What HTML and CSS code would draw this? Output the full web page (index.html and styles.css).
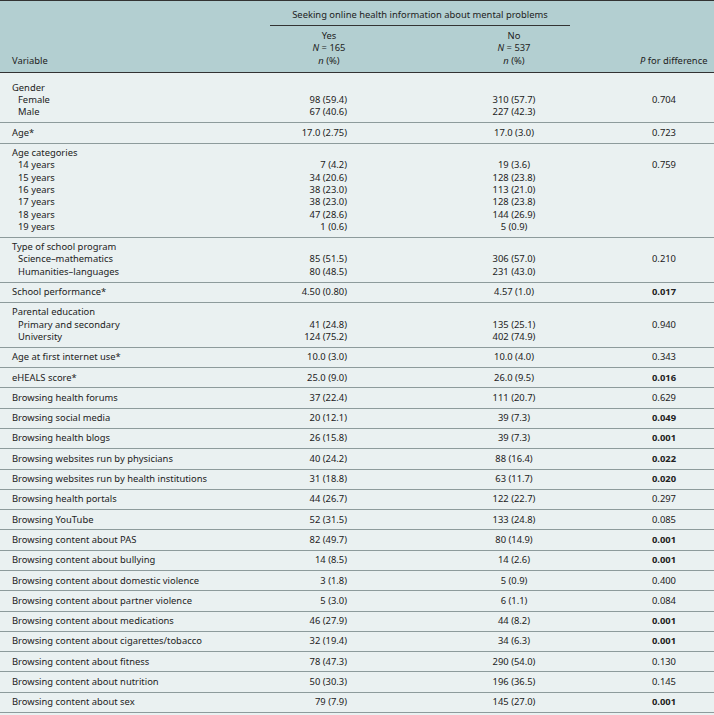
FILE: index.html
```html
<!DOCTYPE html>
<html>
<head>
<meta charset="utf-8">
<link rel="stylesheet" href="styles.css">
</head>
<body>
<table class="tbl">
  <colgroup>
    <col class="c-var"><col class="c-yes"><col class="c-no"><col class="c-p">
  </colgroup>
  <thead>
    <tr class="h1">
      <th rowspan="2" class="var h-var">Variable</th>
      <th colspan="2" class="span-cell"><div class="spanner">Seeking online health information about mental problems</div></th>
      <th rowspan="2" class="h-p"><i>P</i> for difference</th>
    </tr>
    <tr class="h2">
      <th class="h-yes">Yes<br><i>N</i> = 165<br><i>n</i> (%)</th>
      <th class="h-no">No<br><i>N</i> = 537<br><i>n</i> (%)</th>
    </tr>
  </thead>
  <tbody>
    <tr class="first">
      <td class="var">Gender<div class="sub">Female</div><div class="sub">Male</div></td>
      <td class="yes"><br>98 (59.4)<br>67 (40.6)</td>
      <td class="no"><br>310 (57.7)<br>227 (42.3)</td>
      <td class="p"><br>0.704</td>
    </tr>
    <tr><td class="var">Age*</td><td class="yes">17.0 (2.75)</td><td class="no">17.0 (3.0)</td><td class="p">0.723</td></tr>
    <tr>
      <td class="var">Age categories<div class="sub">14 years</div><div class="sub">15 years</div><div class="sub">16 years</div><div class="sub">17 years</div><div class="sub">18 years</div><div class="sub">19 years</div></td>
      <td class="yes"><br>7 (4.2)<br>34 (20.6)<br>38 (23.0)<br>38 (23.0)<br>47 (28.6)<br>1 (0.6)</td>
      <td class="no"><br>19 (3.6)<br>128 (23.8)<br>113 (21.0)<br>128 (23.8)<br>144 (26.9)<br>5 (0.9)</td>
      <td class="p"><br>0.759</td>
    </tr>
    <tr>
      <td class="var">Type of school program<div class="sub">Science–mathematics</div><div class="sub">Humanities–languages</div></td>
      <td class="yes"><br>85 (51.5)<br>80 (48.5)</td>
      <td class="no"><br>306 (57.0)<br>231 (43.0)</td>
      <td class="p"><br>0.210</td>
    </tr>
    <tr><td class="var">School performance*</td><td class="yes">4.50 (0.80)</td><td class="no">4.57 (1.0)</td><td class="p"><b>0.017</b></td></tr>
    <tr>
      <td class="var">Parental education<div class="sub">Primary and secondary</div><div class="sub">University</div></td>
      <td class="yes"><br>41 (24.8)<br>124 (75.2)</td>
      <td class="no"><br>135 (25.1)<br>402 (74.9)</td>
      <td class="p"><br>0.940</td>
    </tr>
    <tr><td class="var">Age at first internet use*</td><td class="yes">10.0 (3.0)</td><td class="no">10.0 (4.0)</td><td class="p">0.343</td></tr>
    <tr><td class="var">eHEALS score*</td><td class="yes">25.0 (9.0)</td><td class="no">26.0 (9.5)</td><td class="p"><b>0.016</b></td></tr>
    <tr><td class="var">Browsing health forums</td><td class="yes">37 (22.4)</td><td class="no">111 (20.7)</td><td class="p">0.629</td></tr>
    <tr><td class="var">Browsing social media</td><td class="yes">20 (12.1)</td><td class="no">39 (7.3)</td><td class="p"><b>0.049</b></td></tr>
    <tr><td class="var">Browsing health blogs</td><td class="yes">26 (15.8)</td><td class="no">39 (7.3)</td><td class="p"><b>0.001</b></td></tr>
    <tr><td class="var">Browsing websites run by physicians</td><td class="yes">40 (24.2)</td><td class="no">88 (16.4)</td><td class="p"><b>0.022</b></td></tr>
    <tr><td class="var">Browsing websites run by health institutions</td><td class="yes">31 (18.8)</td><td class="no">63 (11.7)</td><td class="p"><b>0.020</b></td></tr>
    <tr><td class="var">Browsing health portals</td><td class="yes">44 (26.7)</td><td class="no">122 (22.7)</td><td class="p">0.297</td></tr>
    <tr><td class="var">Browsing YouTube</td><td class="yes">52 (31.5)</td><td class="no">133 (24.8)</td><td class="p">0.085</td></tr>
    <tr><td class="var">Browsing content about PAS</td><td class="yes">82 (49.7)</td><td class="no">80 (14.9)</td><td class="p"><b>0.001</b></td></tr>
    <tr><td class="var">Browsing content about bullying</td><td class="yes">14 (8.5)</td><td class="no">14 (2.6)</td><td class="p"><b>0.001</b></td></tr>
    <tr><td class="var">Browsing content about domestic violence</td><td class="yes">3 (1.8)</td><td class="no">5 (0.9)</td><td class="p">0.400</td></tr>
    <tr><td class="var">Browsing content about partner violence</td><td class="yes">5 (3.0)</td><td class="no">6 (1.1)</td><td class="p">0.084</td></tr>
    <tr><td class="var">Browsing content about medications</td><td class="yes">46 (27.9)</td><td class="no">44 (8.2)</td><td class="p"><b>0.001</b></td></tr>
    <tr><td class="var">Browsing content about cigarettes/tobacco</td><td class="yes">32 (19.4)</td><td class="no">34 (6.3)</td><td class="p"><b>0.001</b></td></tr>
    <tr><td class="var">Browsing content about fitness</td><td class="yes">78 (47.3)</td><td class="no">290 (54.0)</td><td class="p">0.130</td></tr>
    <tr><td class="var">Browsing content about nutrition</td><td class="yes">50 (30.3)</td><td class="no">196 (36.5)</td><td class="p">0.145</td></tr>
    <tr><td class="var">Browsing content about sex</td><td class="yes">79 (7.9)</td><td class="no">145 (27.0)</td><td class="p"><b>0.001</b></td></tr>
  </tbody>
</table>
</body>
</html>
```
FILE: styles.css
```css
html, body {
  margin: 0;
  padding: 0;
  background: #eaf1f1;
}
.tbl {
  width: 714px;
  table-layout: fixed;
  border-collapse: collapse;
  font-family: "Noto Sans", "Open Sans", sans-serif;
  font-size: 9.4px;
  line-height: 12.3px;
  color: #222;
}
.c-var { width: 270px; }
.c-yes { width: 118px; }
.c-no { width: 252px; }
.c-p { width: 74px; }

.tbl thead th {
  background: #b3cfd1;
  font-weight: normal;
  padding: 0;
  white-space: nowrap;
}
.tbl thead tr.h1 th {
  border-top: 1.5px solid #333;
}
.tbl thead tr.h2 th,
.tbl thead th[rowspan] {
  border-bottom: 1.5px solid #333;
}
.h1 { height: 26px; }
.span-cell {
  vertical-align: top;
  padding: 0;
}
.spanner {
  width: 300px;
  padding-top: 7.5px;
  padding-bottom: 4.5px;
  text-align: center;
  border-bottom: 1px solid #333;
}
.h-var {
  text-align: left;
  vertical-align: bottom;
  padding-left: 12px !important;
  padding-bottom: 5px !important;
}
.h-p {
  text-align: right;
  vertical-align: bottom;
  padding-right: 11px !important;
  padding-bottom: 5px !important;
}
.h-yes, .h-no {
  text-align: center;
  vertical-align: top;
  padding-top: 3.5px !important;
  padding-bottom: 5px !important;
}

.tbl tbody td {
  padding: 3.5px 0;
  vertical-align: top;
  border-bottom: 1px solid #8d9b9c;
  white-space: nowrap;
}
.tbl tbody tr.first td {
  padding-top: 9px;
}
.tbl td.var { padding-left: 12px; }
.sub { padding-left: 6px; }
.tbl td.yes { text-align: right; padding-right: 41px; }
.tbl td.no { text-align: center; }
.tbl td.p { padding-left: 12px; text-align: left; }
b { font-weight: 700; }
```
